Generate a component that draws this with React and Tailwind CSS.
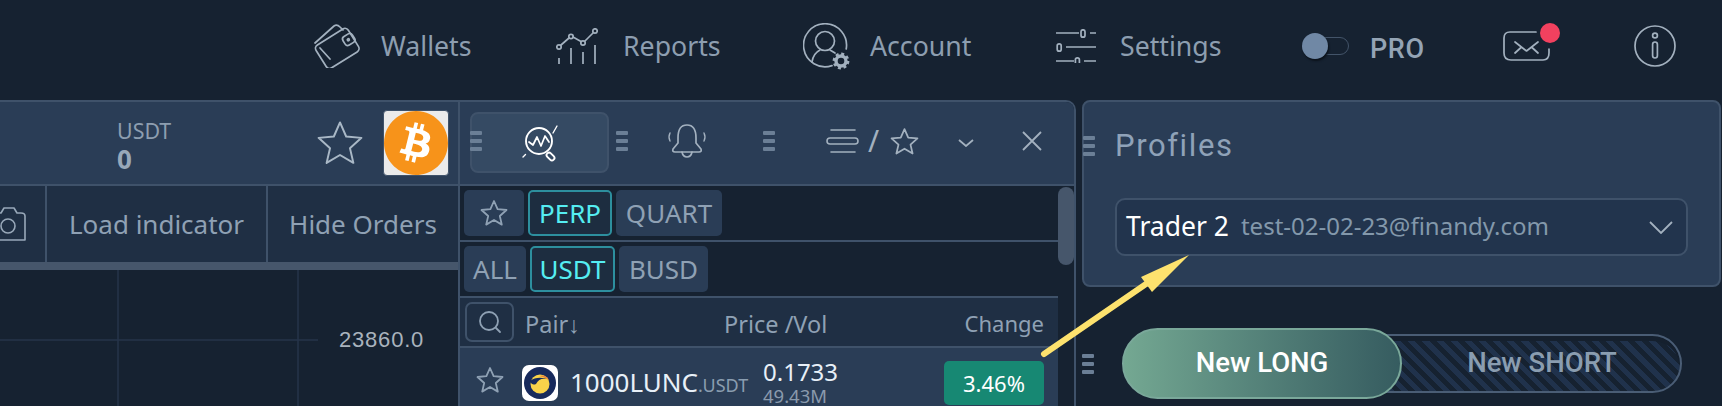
import React from "react";
import { SiBitcoin } from "react-icons/si";

const plex = "font-['Noto_Sans',sans-serif]";
const din = "font-['Roboto',sans-serif]";

function Handle({ className = "" }) {
  return (
    <div className={`flex w-[12px] flex-col gap-[4px] ${className}`}>
      <span className="h-[4px] rounded-[1px] bg-[#6b7f96]" />
      <span className="h-[4px] rounded-[1px] bg-[#6b7f96]" />
      <span className="h-[4px] rounded-[1px] bg-[#6b7f96]" />
    </div>
  );
}

function Star({ size = 28, color = "#8fa1b4", sw = 1.8 }) {
  return (
    <svg width={size} height={size} viewBox="0 0 28 28" fill="none" stroke={color} strokeWidth={sw} strokeLinejoin="round">
      <path d="M14 2 L17.6 10.2 L26.5 11 L19.8 17 L21.8 25.6 L14 21 L6.2 25.6 L8.2 17 L1.5 11 L10.4 10.2 Z" />
    </svg>
  );
}

const navStroke = { fill: "none", stroke: "#a3b1bf", strokeWidth: 1.7, strokeLinecap: "round", strokeLinejoin: "round" };

function WalletIcon() {
  return (
    <svg width="46" height="44" viewBox="0 0 46 44" {...navStroke}>
      <path d="M1 19 L20 2 Q23 0 26 3 L29 6" />
      <g transform="rotate(-32 23 24)">
        <rect x="4" y="11" width="38" height="27" rx="4" />
        <rect x="32" y="18" width="11" height="10" rx="3" />
        <circle cx="37" cy="23" r="1" />
      </g>
      <path d="M6 24 L16 35" />
    </svg>
  );
}
function ReportsIcon() {
  return (
    <svg width="42" height="36" viewBox="0 0 42 36" {...navStroke}>
      <path d="M5 17 L13 10 M17 9 L25 13.5 M29 13 L37 5" />
      <circle cx="3" cy="19" r="2.2" />
      <circle cx="15" cy="8.5" r="2.2" />
      <circle cx="27" cy="15" r="2.2" />
      <circle cx="39" cy="3" r="2.2" />
      <path d="M3 30 V36 M15 20 V36 M27 24 V36 M39 17 V36" strokeLinecap="butt" />
    </svg>
  );
}
function AccountIcon() {
  return (
    <svg width="47" height="47" viewBox="0 0 47 47" {...navStroke}>
      <path d="M29 42.6 A21.5 21.5 0 1 1 43.2 26" />
      <circle cx="22" cy="18" r="9.5" />
      <path d="M9 39 C10 32 13 29 17 27 M27 27 L32 30" />
      <circle cx="38" cy="38" r="5" strokeWidth="3.4" />
      <circle cx="38" cy="38" r="7.2" strokeWidth="2.4" strokeDasharray="3 2.65" strokeLinecap="butt" />
    </svg>
  );
}
function SettingsIcon() {
  return (
    <svg width="40" height="34" viewBox="0 0 40 34" {...navStroke} strokeLinecap="butt">
      <path d="M0 4 H23 M34 4 H40 M10 18 H40 M0 32 H18 M28 32 H40" />
      <rect x="25" y="0.8" width="4" height="7.4" rx="2" />
      <rect x="1.2" y="14.8" width="4" height="7.4" rx="2" />
      <rect x="19.4" y="28.8" width="4" height="7.4" rx="2" />
    </svg>
  );
}
function MailIcon() {
  return (
    <svg width="47" height="30" viewBox="0 0 47 30" {...navStroke}>
      <path d="M33 1 H7 Q1 1 1 7 V22 Q1 29 8 29 H40 Q46 29 46 22 V18" />
      <path d="M12 11 L23.5 20 L35 11 M12 22 L18 16.5 M35 22 L29 16.5" />
    </svg>
  );
}
function InfoIcon() {
  return (
    <svg width="42" height="42" viewBox="0 0 42 42" {...navStroke}>
      <circle cx="21" cy="21" r="20" />
      <circle cx="21" cy="10.5" r="2.4" />
      <rect x="18.6" y="17" width="4.8" height="16" rx="2.4" />
    </svg>
  );
}
function CameraIcon() {
  return (
    <svg width="34" height="34" viewBox="0 0 34 34" fill="none" stroke="#98a8b9" strokeWidth="1.6" strokeLinejoin="round" className="shrink-0">
      <path d="M2 6 H9 L12 1 H22 L25 6 H29 Q33 6 33 9 V33 H2 Z" />
      <circle cx="16" cy="19" r="7" />
    </svg>
  );
}
function PulseSearch() {
  return (
    <svg width="38" height="38" viewBox="0 0 38 38" fill="none" stroke="#fff" strokeWidth="1.9" strokeLinecap="round" strokeLinejoin="round">
      <circle cx="18" cy="17" r="13" />
      <path d="M8 18 L12 21 L16 13 L20 22 L24 12 L28 18" strokeWidth="1.7" />
      <rect x="27" y="28" width="5" height="9" rx="2.5" transform="rotate(-45 29.5 32.5)" />
      <path d="M2 33 L4.5 30.5 M32 9 L36 2" strokeWidth="1.4" />
    </svg>
  );
}
function BellIcon() {
  return (
    <svg width="40" height="34" viewBox="0 0 40 34" fill="none" stroke="#a3b1bf" strokeWidth="1.7" strokeLinecap="round" strokeLinejoin="round">
      <path d="M11 14 C11 5 14 1 20 1 C26 1 29 5 29 14 V19 L34 25 Q35 28 32 28 H8 Q5 28 6 25 L11 19 Z" />
      <path d="M15 28 Q16 33 20 33 Q24 33 25 28" />
      <path d="M3 9 Q1 13 3 17 M37 9 Q39 13 37 17" strokeWidth="1.4" />
    </svg>
  );
}
function LinesIcon() {
  return (
    <svg width="33" height="26" viewBox="0 0 33 26" fill="none" stroke="#a3b1bf" strokeWidth="1.6" strokeLinecap="round">
      <path d="M5 2 H29 M5 24 H29" />
      <rect x="1" y="10" width="31" height="6" rx="3" />
    </svg>
  );
}

function Tile({ children, active, className = "" }) {
  return (
    <div
      className={`flex h-[46px] items-center justify-center rounded-[5px] text-[26px] ${plex} ${
        active ? "border-2 border-[#2d8f9e] bg-[#1d2d40] text-[#55edf2]" : "bg-[#2a3d56] text-[#8fa1b4]"
      } ${className}`}
    >
      {children}
    </div>
  );
}

function NavItem({ w, icon, label, gap }) {
  return (
    <div className={`flex items-center ${w}`}>
      {icon}
      <span className={`text-[26.7px] leading-none text-[#8d9eb0] ${plex} ${gap}`}>{label}</span>
    </div>
  );
}

export default function App() {
  return (
    <div className="relative h-[406px] w-[1722px] overflow-hidden bg-[#162231]">
      {/* top bar */}
      <header className="flex h-[100px] items-center pl-[314px] pb-[8px]">
        <NavItem w="w-[242px]" gap="ml-[21px]" label="Wallets" icon={<WalletIcon />} />
        <NavItem w="w-[247px]" gap="ml-[25px]" label="Reports" icon={<ReportsIcon />} />
        <NavItem w="w-[253px]" gap="ml-[20px]" label="Account" icon={<AccountIcon />} />
        <NavItem w="w-[246px]" gap="ml-[24px]" label="Settings" icon={<SettingsIcon />} />
        <div className="relative flex h-[26px] w-[68px] items-center">
          <div className="ml-[14px] h-[18px] w-[33px] rounded-full border-[1.5px] border-[#435469]" />
          <div className="absolute left-0 top-0 h-[26px] w-[26px] rounded-full bg-[#7088a5] shadow-[1px_2px_2px_#0b121b]" />
        </div>
        <div className={`mt-[7px] w-[133px] text-[27px] font-medium leading-none tracking-[0.6px] text-[#94a4b5] ${din}`}>PRO</div>
        <div className="relative w-[131px]">
          <MailIcon />
          <span className="absolute left-[37px] top-[-8px] h-[20px] w-[20px] rounded-full bg-[#f2415f]" />
        </div>
        <InfoIcon />
      </header>

      <div className="flex h-[306px] items-stretch">
        {/* chart panel */}
        <section className="flex w-[460px] shrink-0 flex-col border-r-2 border-t-2 border-[#3f526a] bg-[#162231]">
          <div className="flex h-[82px] shrink-0 items-center bg-[#2a3d56] pl-[117px] pr-[9px]">
            <div className={`mt-[5px] flex flex-col ${plex}`}>
              <span className="text-[21.4px] leading-[24px] text-[#8d9eb0]">USDT</span>
              <span className="mt-[2px] text-[26px] font-bold leading-[28px] text-[#98a8b9]">0</span>
            </div>
            <div className="ml-auto mr-[19px]">
              <Star size={48} color="#a9b8c6" sw={1.15} />
            </div>
            <div className="flex h-[66px] w-[66px] items-center justify-center rounded-[4px] border border-[#3f526a] bg-[#ebebeb]">
              <div className="relative flex h-[64px] w-[64px] items-center justify-center">
                <span className="absolute inset-[8px] rounded-full bg-white" />
                <SiBitcoin size={64} color="#f7931a" className="relative" />
              </div>
            </div>
          </div>
          <div className={`flex h-[78px] shrink-0 border-t-2 border-[#3f526a] bg-[#1f2f44] text-[26px] text-[#8fa1b4] ${plex}`}>
            <div className="flex w-[47px] items-center justify-end overflow-hidden border-r-2 border-[#3f526a] pr-[19px]">
              <CameraIcon />
            </div>
            <div className="flex w-[221px] items-center justify-center border-r-2 border-[#3f526a] pt-[1px]">Load indicator</div>
            <div className="flex flex-1 items-center justify-center pt-[1px]">Hide Orders</div>
          </div>
          <div className="h-[8px] shrink-0 bg-[#46566b]" />
          <div className="relative flex-1">
            <svg width="458" height="136" className="absolute left-0 top-0" fill="none" stroke="#26344a" strokeWidth="1.5">
              <path d="M118 0 V136 M298 0 V136 M0 70 H318" />
            </svg>
            <span className="absolute left-[339px] top-[55px] font-['Liberation_Sans',sans-serif] text-[22px] leading-[30px] tracking-[0.8px] text-[#a9b3bd]">
              23860.0
            </span>
          </div>
        </section>

        {/* market panel */}
        <section className="flex w-[616px] shrink-0 flex-col overflow-hidden rounded-tr-[10px] border-r-2 border-t-2 border-[#3f526a] bg-[#162231]">
          <div className="flex h-[82px] shrink-0 items-center bg-[#2a3d56] pb-[4px] pl-[10px]">
            <div className="relative mt-[3px] flex h-[61px] w-[139px] items-center justify-center rounded-[8px] border-2 border-[#3f526a] bg-[#354a63]">
              <Handle className="absolute left-0 top-[17px] -ml-[2px]" />
              <PulseSearch />
            </div>
            <Handle className="ml-[7px]" />
            <div className="ml-[39px]"><BellIcon /></div>
            <Handle className="ml-[56px]" />
            <div className="ml-[51px]"><LinesIcon /></div>
            <span className={`ml-[9px] text-[30px] leading-none text-[#a3b1bf] ${plex}`}>/</span>
            <div className="ml-[11px]"><Star size={29} color="#a3b1bf" sw={1.7} /></div>
            <svg className="ml-[39px] mt-[3px]" width="16" height="8" viewBox="0 0 16 8" fill="none" stroke="#a3b1bf" strokeWidth="1.8"><path d="M1 1 L8 7 L15 1" /></svg>
            <svg className="ml-[48px]" width="20" height="20" viewBox="0 0 20 20" fill="none" stroke="#a3b1bf" strokeWidth="1.8"><path d="M1 1 L19 19 M19 1 L1 19" /></svg>
          </div>
          <div className="flex min-h-0 flex-1 border-t-2 border-[#3f526a]">
            <div className="flex w-[598px] shrink-0 flex-col">
              <div className="flex h-[56px] shrink-0 gap-[4px] border-b-2 border-[#3f526a] pl-[4px] pt-[4px]">
                <Tile className="w-[60px]"><Star size={28} /></Tile>
                <Tile active className="w-[84px]">PERP</Tile>
                <Tile className="w-[106px]">QUART</Tile>
              </div>
              <div className="flex h-[56px] shrink-0 gap-[4px] border-b-2 border-[#3f526a] pl-[4px] pt-[4px]">
                <Tile className="w-[62px]">ALL</Tile>
                <Tile active className="w-[85px]">USDT</Tile>
                <Tile className="w-[89px]">BUSD</Tile>
              </div>
              <div className={`flex h-[50px] shrink-0 items-center border-b-2 border-[#3f526a] bg-[#1f2f44] pl-[5px] pr-[14px] text-[#8fa1b4] ${plex}`}>
                <div className="flex h-[40px] w-[49px] items-center justify-center rounded-[7px] border-2 border-[#3f526a]">
                  <svg width="24" height="24" viewBox="0 0 24 24" fill="none" stroke="#8fa1b4" strokeWidth="1.8" strokeLinecap="round">
                    <circle cx="11" cy="11" r="9" />
                    <path d="M18 18 L22 22" />
                  </svg>
                </div>
                <span className="ml-[11px] mt-[4px] w-[199px] text-[23.5px] leading-[30px]">Pair↓</span>
                <span className="mt-[3px] text-[23.5px] leading-[30px]">Price /Vol</span>
                <span className="ml-auto mt-[2px] text-[22px] leading-[30px]">Change</span>
              </div>
              <div className={`flex flex-1 items-start bg-[#2a3d56] pl-[16px] pr-[14px] pt-[12px] ${plex}`}>
                <div className="mt-[6px]"><Star size={28} /></div>
                <div className="ml-[18px] mt-[5px] flex h-[36px] w-[36px] items-center justify-center rounded-[7px] bg-white">
                  <svg width="32" height="32" viewBox="0 0 32 32">
                    <circle cx="16" cy="16" r="16" fill="#172a5c" />
                    <circle cx="16" cy="17" r="9.5" fill="#f8d24a" />
                    <path d="M6 14 Q14 8 26 13 Q16 9 12 17 Q8 19 6 14 Z" fill="#172a5c" />
                    <path d="M15 9 Q22 7 25 13 Q20 10 15 9 Z" fill="#e8843c" />
                  </svg>
                </div>
                <div className="ml-[12px] flex w-[193px] items-baseline pt-[7px]">
                  <span className="text-[26px] leading-[30px] text-[#e8f0f8]">1000LUNC</span>
                  <span className="text-[18px] leading-[30px] text-[#8a9db0]">.USDT</span>
                </div>
                <div className="-mt-[2px] flex flex-col">
                  <span className="text-[24px] leading-[28px] text-[#e8f0f8]">0.1733</span>
                  <span className="text-[18.5px] leading-[20px] text-[#8a9aad]">49.43M</span>
                </div>
                <div className="ml-auto mt-[1px] flex h-[44px] w-[100px] items-center justify-center rounded-[5px] bg-[#178873] text-[22px] text-white">3.46%</div>
              </div>
            </div>
            <div className="flex-1 pt-[1px]">
              <div className="h-[78px] w-[16px] rounded-full bg-[#46566b]" />
            </div>
          </div>
        </section>

        {/* right column */}
        <aside className="ml-[6px] mr-[1px] flex flex-1 flex-col">
          <div className="relative h-[187px] shrink-0 rounded-[8px] border-2 border-[#3f526a] bg-[#2a3d56] px-[31px]">
            <Handle className="absolute -left-[1px] top-[34px]" />
            <h2 className={`mt-[27px] text-[31px] font-normal leading-[34px] tracking-[1.6px] text-[#8fa2b8] ${din}`}>Profiles</h2>
            <div className={`mt-[35px] flex h-[58px] items-center rounded-[10px] border-2 border-[#3f526a] bg-[#22344d] pl-[9px] pr-[13px] ${plex}`}>
              <span className="text-[26.5px] text-white">Trader 2</span>
              <span className="ml-[12px] -mt-[2px] text-[24px] text-[#8398ab]">test-02-02-23@finandy.com</span>
              <svg className="ml-auto" width="24" height="13" viewBox="0 0 24 13" fill="none" stroke="#a3b1bf" strokeWidth="1.8"><path d="M1 1 L12 12 L23 1" /></svg>
            </div>
          </div>
          <div className={`relative mt-[41px] flex items-center text-[27.5px] font-medium leading-none ${din}`}>
            <Handle className="mr-[28px]" />
            <div className="relative z-10 flex h-[71px] w-[280px] shrink-0 items-center justify-center rounded-full border-2 border-[#7aa89a] bg-gradient-to-r from-[#74a892] to-[#365c60] pb-[2px] text-white">
              New LONG
            </div>
            <div className="-ml-[31px] flex h-[59px] w-[311px] shrink-0 items-center justify-center rounded-r-full border-2 border-[#4a5d75] bg-[repeating-linear-gradient(45deg,#20324c_0,#20324c_5px,#162231_5px,#162231_10px)] pb-[2px] pl-[31px] text-[#8a9db0] shadow-[inset_0_5px_0_#15202e]">
              New SHORT
            </div>
          </div>
        </aside>
      </div>

      {/* annotation arrow */}
      <svg className="pointer-events-none absolute left-0 top-0 z-20" width="1722" height="406" fill="none">
        <path d="M1044 354 L1146 284" stroke="#fde26e" strokeWidth="6" strokeLinecap="round" />
        <path d="M1189 255 L1141 277 L1152 292 Z" fill="#fde26e" />
      </svg>
    </div>
  );
}
